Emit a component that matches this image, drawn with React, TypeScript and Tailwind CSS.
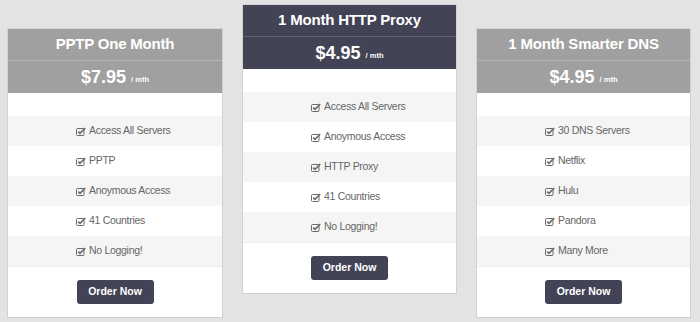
const plans = [
  {
    title: "PPTP One Month",
    price: "$7.95",
    featured: false,
    features: ["Access All Servers", "PPTP", "Anoymous Access", "41 Countries", "No Logging!"],
  },
  {
    title: "1 Month HTTP Proxy",
    price: "$4.95",
    featured: true,
    features: ["Access All Servers", "Anoymous Access", "HTTP Proxy", "41 Countries", "No Logging!"],
  },
  {
    title: "1 Month Smarter DNS",
    price: "$4.95",
    featured: false,
    features: ["30 DNS Servers", "Netflix", "Hulu", "Pandora", "Many More"],
  },
];

const CheckIcon = () => (
  <svg width="10" height="9" viewBox="0 0 10 9" className="mr-[3px] shrink-0">
    <rect x="0.5" y="1.5" width="7.5" height="7" rx="1" fill="none" stroke="#6a6a6a" strokeWidth="1" />
    <path d="M2.2 4.6 L4 6.4 L9.2 1" fill="none" stroke="#6a6a6a" strokeWidth="1.6" />
  </svg>
);

const PlanCard = ({ plan, wide }: { plan: (typeof plans)[number]; wide: boolean }) => {
  const head = plan.featured ? "bg-[#434356] border-[#5e5e6e]" : "bg-[#a0a0a0] border-[#b6b6b6]";
  return (
    <div
      className={`${wide ? "w-[216px]" : "w-[215px]"} ${plan.featured ? "mt-[4px]" : "mt-[28px]"} bg-white border border-[#d2d2d2] text-white`}
    >
      <div className={`${head} h-[32px] flex items-center justify-center border-b text-[15px] font-bold tracking-[-0.2px]`}>
        {plan.title}
      </div>
      <div className={`${plan.featured ? "bg-[#434356]" : "bg-[#a0a0a0]"} h-[32px] flex items-center justify-center`}>
        <span className="text-[18px] font-bold">{plan.price}</span>
        <span className="text-[7.5px] font-bold ml-[5px] mt-[5px]">/ mth</span>
      </div>
      <div className="h-[23px]" />
      <ul className="border-b border-[#ebebeb]">
        {plan.features.map((f, i) => (
          <li
            key={f}
            className={`${i % 2 === 0 ? "bg-[#f5f5f5]" : "bg-white"} h-[30px] flex items-center pl-[68px] whitespace-nowrap text-[10.5px] tracking-[-0.3px] text-[#666]`}
          >
            <CheckIcon />
            {f}
          </li>
        ))}
      </ul>
      <div className="flex justify-center py-[13px]">
        <button className="w-[77px] h-[24px] rounded-[3px] bg-[#434356] text-white text-[10.5px] font-bold">
          Order Now
        </button>
      </div>
    </div>
  );
};

export default function App() {
  return (
    <div
      className="w-[700px] h-[322px] bg-[#e3e3e3] flex items-start gap-[19px] pl-[7px] overflow-hidden"
      style={{ fontFamily: '"Liberation Sans", Arial, sans-serif' }}
    >
      {plans.map((p, i) => (
        <PlanCard key={p.title} plan={p} wide={i === 0} />
      ))}
    </div>
  );
}
